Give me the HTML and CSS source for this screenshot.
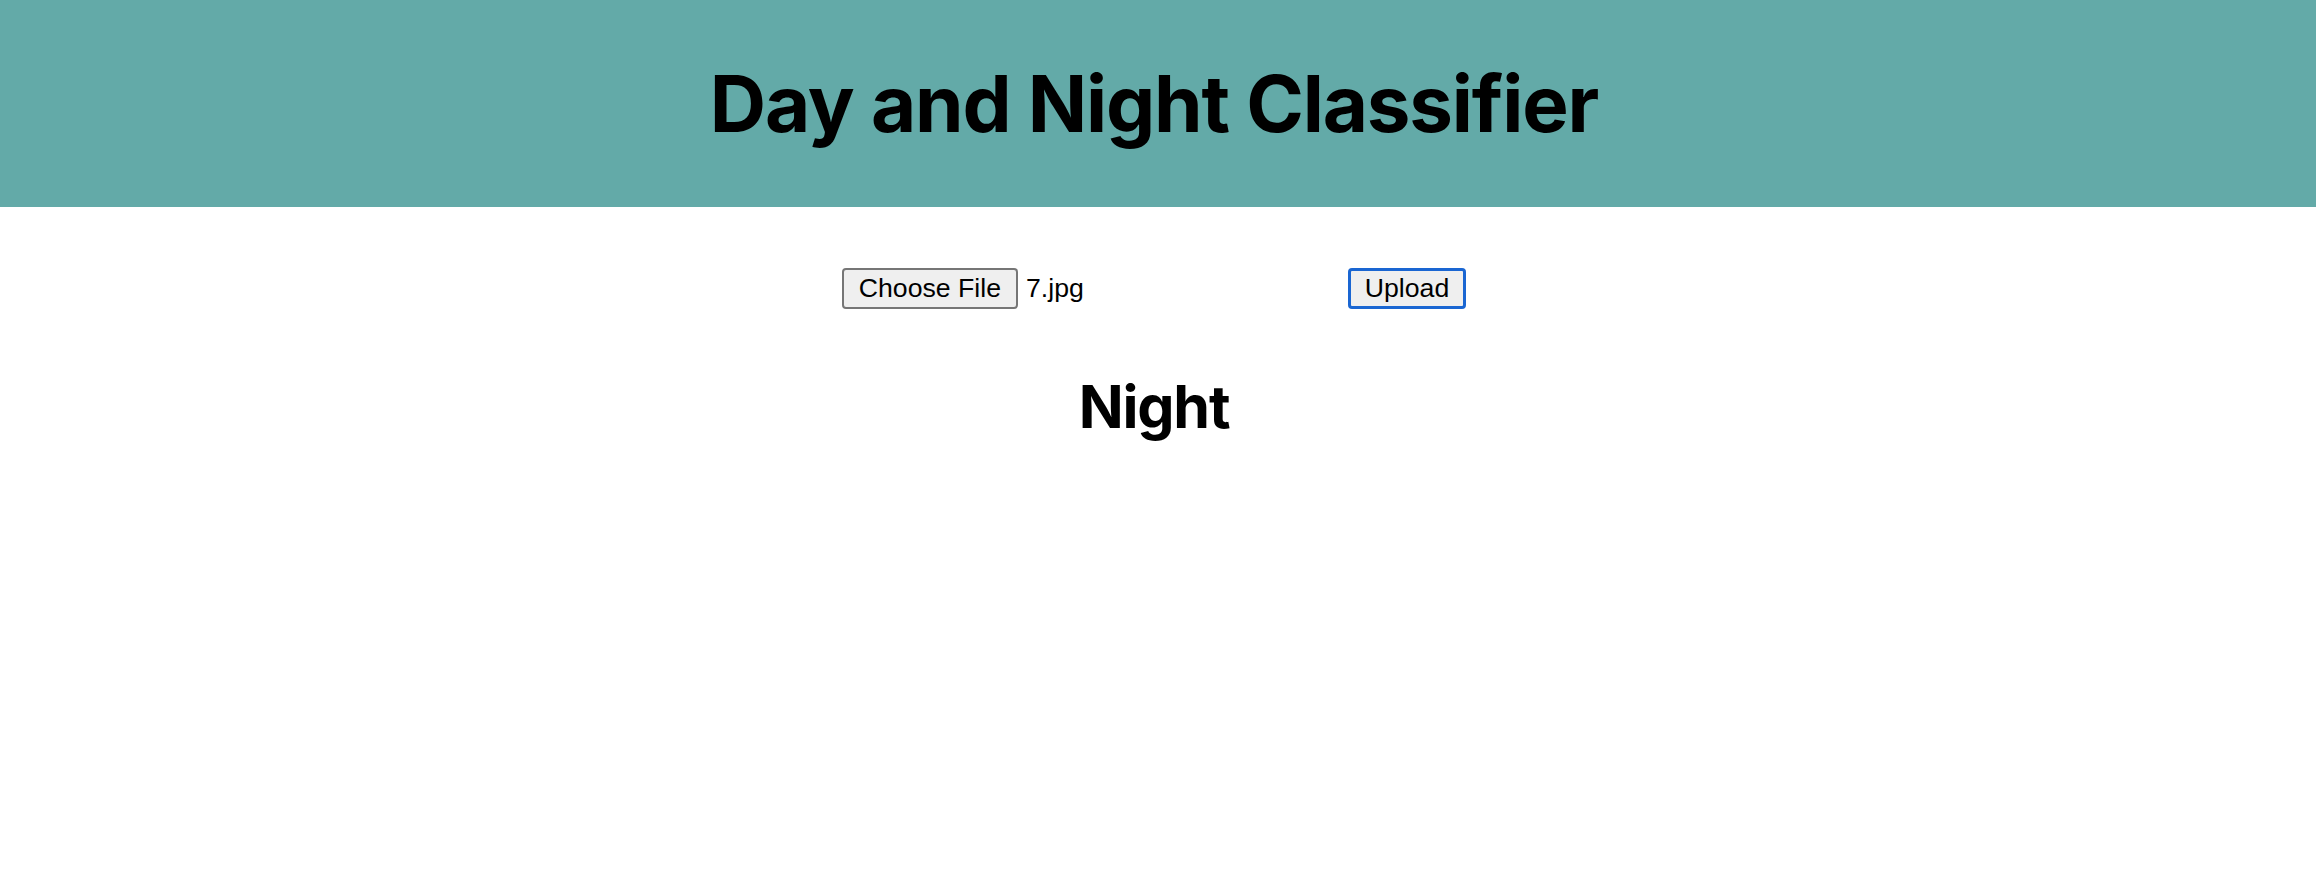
FILE: index.html
```html
<!DOCTYPE html>
<html lang="en">
<head>
<meta charset="utf-8">
<title>Day and Night Classifier</title>
<link rel="stylesheet" href="styles.css">
</head>
<body>
<header class="banner">
  <h1 class="title">Day and Night Classifier</h1>
</header>
<main class="content">
  <form class="upload-form">
    <div class="file-picker">
      <span class="file-button">Choose File</span>
      <span class="file-name">7.jpg</span>
    </div>
    <button class="upload-button" type="button">Upload</button>
  </form>
  <h2 class="result">Night</h2>
</main>
</body>
</html>
```

FILE: styles.css
```css
html, body {
  margin: 0;
  padding: 0;
  background: #ffffff;
}

body {
  font-family: Inter, "Noto Sans", sans-serif;
  color: #000000;
}

.banner {
  height: 207px;
  padding-right: 8px;
  background: #63aaa8;
  display: flex;
  align-items: center;
  justify-content: center;
}

.title {
  margin: 0;
  font-family: Inter, sans-serif;
  font-weight: 700;
  font-size: 78px;
  line-height: 1.2;
  letter-spacing: -0.015em;
}

.content {
  padding-right: 8px;
  display: flex;
  flex-direction: column;
  align-items: center;
}

.upload-form {
  margin-top: 61px;
  display: flex;
  align-items: center;
  gap: 7px;
  font-family: "Liberation Sans", Arial, sans-serif;
  font-size: 26.67px;
}

.file-picker {
  width: 499px;
  display: flex;
  align-items: center;
  gap: 8px;
}

.file-button,
.upload-button {
  box-sizing: border-box;
  height: 41px;
  display: inline-flex;
  align-items: center;
  background: #efefef;
  color: #000000;
  font-family: "Liberation Sans", Arial, sans-serif;
  font-size: 26.67px;
  line-height: 1;
  border-radius: 4px;
}

.file-button {
  border: 2px solid #767676;
  padding: 0 15px;
}

.file-name {
  line-height: 1;
}

.upload-button {
  border: 3px solid #1a66d2;
  padding: 0 14px;
  margin: 0;
}

.result {
  margin: 63px 0 0;
  font-family: Inter, sans-serif;
  font-weight: 700;
  font-size: 59px;
  line-height: 1.2;
  letter-spacing: -0.02em;
}
```
